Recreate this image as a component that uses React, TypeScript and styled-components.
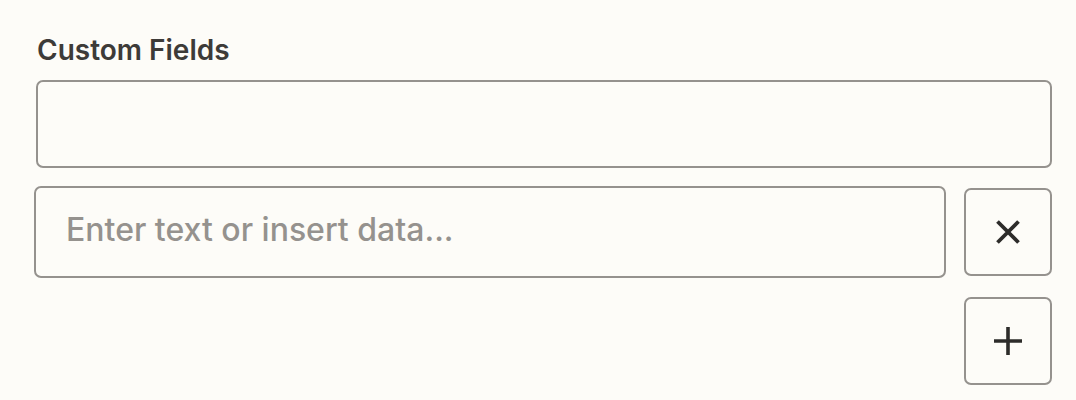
import React from 'react';
import styled, { createGlobalStyle } from 'styled-components';

const GlobalStyle = createGlobalStyle`
  html, body {
    margin: 0;
    padding: 0;
    background: #fdfcf8;
  }
  body {
    font-family: Inter, "Noto Sans", sans-serif;
  }
`;

const Panel = styled.div`
  width: 1076px;
  height: 400px;
  box-sizing: border-box;
  padding: 33px 24px 0 34px;
  display: flex;
  flex-direction: column;
`;

const Label = styled.div`
  margin-left: 3px;
  font-size: 28px;
  line-height: 34px;
  font-weight: 600;
  color: #3d3b38;
  margin-bottom: 13px;
`;

const Field = styled.input<{ $height: number }>`
  box-sizing: border-box;
  height: ${p => p.$height}px;
  border: 2px solid #95928e;
  border-radius: 7px;
  background: #fdfcf8;
  padding: 0 30px 5px;
  font-family: Inter, "Noto Sans", sans-serif;
  font-size: 32px;
  font-weight: 500;
  color: #3d3b38;
  outline: none;

  &::placeholder {
    color: #95928e;
  }
`;

const TopField = styled(Field)`
  margin-left: 2px;
  width: 1016px;
`;

const Row = styled.div`
  display: flex;
  align-items: flex-start;
  gap: 18px;
  margin-top: 18px;
`;

const RowField = styled(Field)`
  width: 912px;
`;

const Actions = styled.div`
  display: flex;
  flex-direction: column;
  gap: 21px;
  padding-top: 2px;
`;

const IconButton = styled.button`
  box-sizing: border-box;
  width: 88px;
  height: 88px;
  border: 2px solid #95928e;
  border-radius: 7px;
  background: #fdfcf8;
  display: flex;
  align-items: center;
  justify-content: center;
  padding: 0;
  cursor: pointer;
  color: #2d2c2a;
`;

export default function App() {
  return (
    <>
      <GlobalStyle />
      <Panel>
        <Label>Custom Fields</Label>
        <TopField $height={88} />
        <Row>
          <RowField $height={92} placeholder="Enter text or insert data..." />
          <Actions>
            <IconButton aria-label="Remove">
              <svg width="24" height="24" viewBox="0 0 24 24" fill="none" stroke="currentColor" strokeWidth="3.8">
                <path d="M1.5 1.5 L22.5 22.5 M22.5 1.5 L1.5 22.5" />
              </svg>
            </IconButton>
            <IconButton aria-label="Add">
              <svg width="28" height="28" viewBox="0 0 28 28" fill="none" stroke="currentColor" strokeWidth="3.6">
                <path d="M14 0 V28 M0 14 H28" />
              </svg>
            </IconButton>
          </Actions>
        </Row>
      </Panel>
    </>
  );
}
